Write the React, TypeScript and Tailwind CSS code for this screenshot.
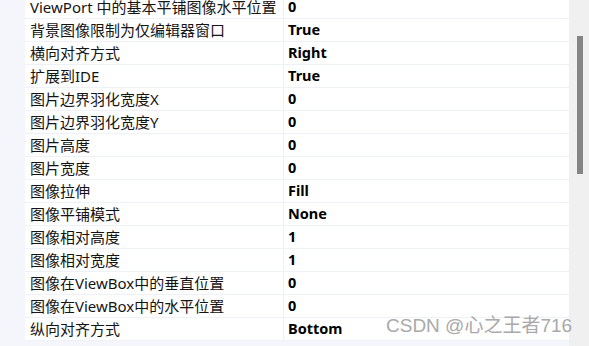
import React from "react";

const rows: [string, string][] = [
  ["ViewPort 中的基本平铺图像水平位置", "0"],
  ["背景图像限制为仅编辑器窗口", "True"],
  ["横向对齐方式", "Right"],
  ["扩展到IDE", "True"],
  ["图片边界羽化宽度X", "0"],
  ["图片边界羽化宽度Y", "0"],
  ["图片高度", "0"],
  ["图片宽度", "0"],
  ["图像拉伸", "Fill"],
  ["图像平铺模式", "None"],
  ["图像相对高度", "1"],
  ["图像相对宽度", "1"],
  ["图像在ViewBox中的垂直位置", "0"],
  ["图像在ViewBox中的水平位置", "0"],
  ["纵向对齐方式", "Bottom"],
];

function App() {
  return (
    <div
      className="relative w-[589px] h-[346px] overflow-hidden bg-[#f4f6fb] flex"
      style={{ fontFamily: '"Noto Sans", "Noto Sans CJK SC", sans-serif' }}
    >
      <div className="w-[25px] shrink-0" />
      <div className="w-[544px] shrink-0 mt-[-4px]">
        {rows.map(([label, value], i) => (
          <div key={i} className="flex h-[23px] bg-white border-b border-[#eef1f7]">
            <div className="w-[259px] shrink-0 border-r border-[#eef1f7] pl-[5px] flex items-center text-[15px] text-[#141414] whitespace-nowrap overflow-hidden">
              {label}
            </div>
            <div className="flex-1 pl-[4px] flex items-center text-[14.5px] font-bold text-black">
              {value}
            </div>
          </div>
        ))}
      </div>
      <div className="w-[20px] shrink-0 bg-[#f0f0f0] relative">
        <div className="absolute left-[8px] top-[36px] w-[6px] h-[138px] bg-[#858585]" />
      </div>
      <div
        className="absolute left-[386px] top-[313px] text-[19px] leading-[26px] text-[#a9a9a9] whitespace-nowrap"
        style={{ fontFamily: '"Liberation Sans", "Noto Sans CJK SC", sans-serif' }}
      >
        CSDN @心之王者716
      </div>
    </div>
  );
}

export default App;
